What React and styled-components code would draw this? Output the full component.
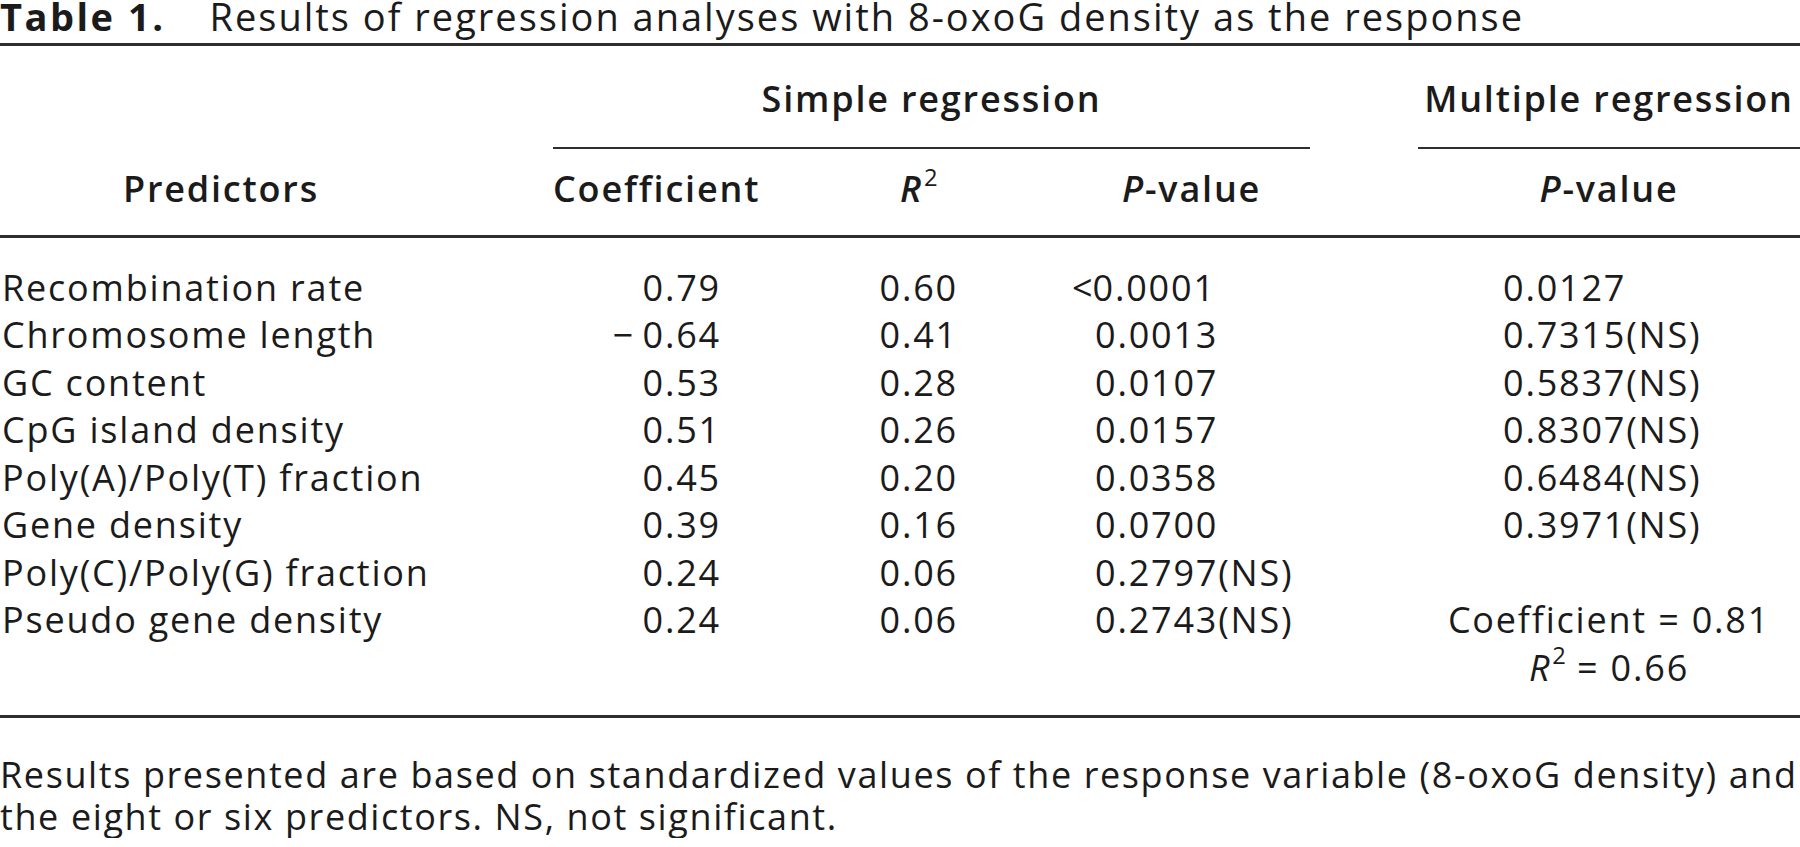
import React from "react";
import styled, { createGlobalStyle, css } from "styled-components";

const Global = createGlobalStyle`
  html, body { margin: 0; padding: 0; background: #ffffff; overflow: hidden; }
  body { font-family: "Open Sans", "Noto Sans", "Liberation Sans", sans-serif; color: #1b1b1b; }
`;

const columns = css`
  display: grid;
  grid-template-columns: 553px 267px 180px 310px 108px 382px;
  width: 1800px;
`;

const Page = styled.div`
  width: 1800px;
  font-size: 36px;
  letter-spacing: 1.8px;
`;

const Caption = styled.div`
  font-size: 38px;
  line-height: 31px;
  padding-top: 1px;
  white-space: nowrap;
  letter-spacing: 2px;
`;

const CaptionLabel = styled.span`
  font-weight: 700;
  margin-right: 44px;
  letter-spacing: 2.5px;
`;

const Rule = styled.div`
  height: ${(p) => (p.$thin ? 2 : 3)}px;
  background: #2e2e2e;
  margin-top: ${(p) => p.$top || 0}px;
  grid-column: ${(p) => p.$col || "auto"};
`;

const SpannerRow = styled.div`
  ${columns};
  padding-top: 29px;
  font-weight: 600;
  line-height: 47.5px;
`;

const Spanner = styled.div`
  grid-column: ${(p) => p.$col};
  text-align: center;
  white-space: nowrap;
`;

const RuleRow = styled.div`
  ${columns};
  margin-top: 24px;
`;

const HeaderRow = styled.div`
  ${columns};
  margin-top: 16.5px;
  font-weight: 600;
  line-height: 47.5px;
`;

const HeadCell = styled.div`
  grid-column: ${(p) => p.$col};
  text-align: ${(p) => p.$align || "left"};
  padding-left: ${(p) => p.$pl || 0}px;
  padding-right: ${(p) => p.$pr || 0}px;
  white-space: nowrap;
`;

const Ital = styled.i`
  font-style: italic;
`;

const Sup = styled.sup`
  font-size: 0.66em;
  font-style: normal;
  font-weight: 400;
  line-height: 0;
  vertical-align: 0.68em;
  letter-spacing: 0;
  margin-left: 1px;
`;

const Body = styled.div`
  padding-top: 25.5px;
  padding-bottom: 24px;
`;

const DataRow = styled.div`
  ${columns};
  line-height: 47.5px;
`;

const Label = styled.div`
  grid-column: 1;
  white-space: nowrap;
  padding-left: 2px;
`;

const Num = styled.div`
  grid-column: ${(p) => p.$col};
  text-align: ${(p) => p.$align || "right"};
  padding-left: ${(p) => p.$pl || 0}px;
  padding-right: ${(p) => p.$pr || 0}px;
  white-space: nowrap;
`;

const Hang = styled.span`
  margin-left: -23px;
  letter-spacing: 0;
`;

const Summary = styled.div`
  grid-column: 6;
  text-align: center;
  white-space: nowrap;
`;

const Footnote = styled.p`
  margin: 36px 0 0;
  font-size: 36px;
  line-height: 42px;
  letter-spacing: 1.6px;
  white-space: nowrap;
`;

const rows = [
  ["Recombination rate", "0.79", "0.60", "<0.0001", "0.0127"],
  ["Chromosome length", "\u2212\u20090.64", "0.41", "0.0013", "0.7315(NS)"],
  ["GC content", "0.53", "0.28", "0.0107", "0.5837(NS)"],
  ["CpG island density", "0.51", "0.26", "0.0157", "0.8307(NS)"],
  ["Poly(A)/Poly(T) fraction", "0.45", "0.20", "0.0358", "0.6484(NS)"],
  ["Gene density", "0.39", "0.16", "0.0700", "0.3971(NS)"],
  ["Poly(C)/Poly(G) fraction", "0.24", "0.06", "0.2797(NS)", ""],
  ["Pseudo gene density", "0.24", "0.06", "0.2743(NS)", null],
];

function PValue({ value }) {
  if (value.startsWith("<")) {
    return (
      <>
        <Hang>&lt;</Hang>
        {value.slice(1)}
      </>
    );
  }
  return value;
}

export default function App() {
  return (
    <>
      <Global />
      <Page>
        <Caption>
          <CaptionLabel>Table 1.</CaptionLabel>
          Results of regression analyses with 8-oxoG density as the response
        </Caption>
        <Rule $top={11} />

        <SpannerRow>
          <Spanner $col="2 / 5">Simple regression</Spanner>
          <Spanner $col="6 / 7">Multiple regression</Spanner>
        </SpannerRow>
        <RuleRow>
          <Rule $thin $col="2 / 5" />
          <Rule $thin $col="6 / 7" />
        </RuleRow>

        <HeaderRow>
          <HeadCell $col="1" $align="center" $pr={111}>
            Predictors
          </HeadCell>
          <HeadCell $col="2">Coefficient</HeadCell>
          <HeadCell $col="3" $pl={80}>
            <Ital>R</Ital>
            <Sup>2</Sup>
          </HeadCell>
          <HeadCell $col="4" $pl={122}>
            <Ital>P</Ital>-value
          </HeadCell>
          <HeadCell $col="6" $align="center">
            <Ital>P</Ital>-value
          </HeadCell>
        </HeaderRow>
        <Rule $top={22.5} />

        <Body>
          {rows.map(([label, coef, r2, p, mp]) => (
            <DataRow key={label}>
              <Label>{label}</Label>
              <Num $col="2" $pr={99}>
                {coef}
              </Num>
              <Num $col="3" $pr={42}>
                {r2}
              </Num>
              <Num $col="4" $align="left" $pl={95}>
                <PValue value={p} />
              </Num>
              {mp === null ? (
                <Summary>
                  Coefficient = 0.81
                  <br />
                  <Ital>R</Ital>
                  <Sup>2</Sup> = 0.66
                </Summary>
              ) : (
                <Num $col="6" $align="left" $pl={85}>
                  {mp}
                </Num>
              )}
            </DataRow>
          ))}
        </Body>
        <Rule />

        <Footnote>
          Results presented are based on standardized values of the response variable (8-oxoG density) and
          <br />
          the eight or six predictors. NS, not significant.
        </Footnote>
      </Page>
    </>
  );
}
